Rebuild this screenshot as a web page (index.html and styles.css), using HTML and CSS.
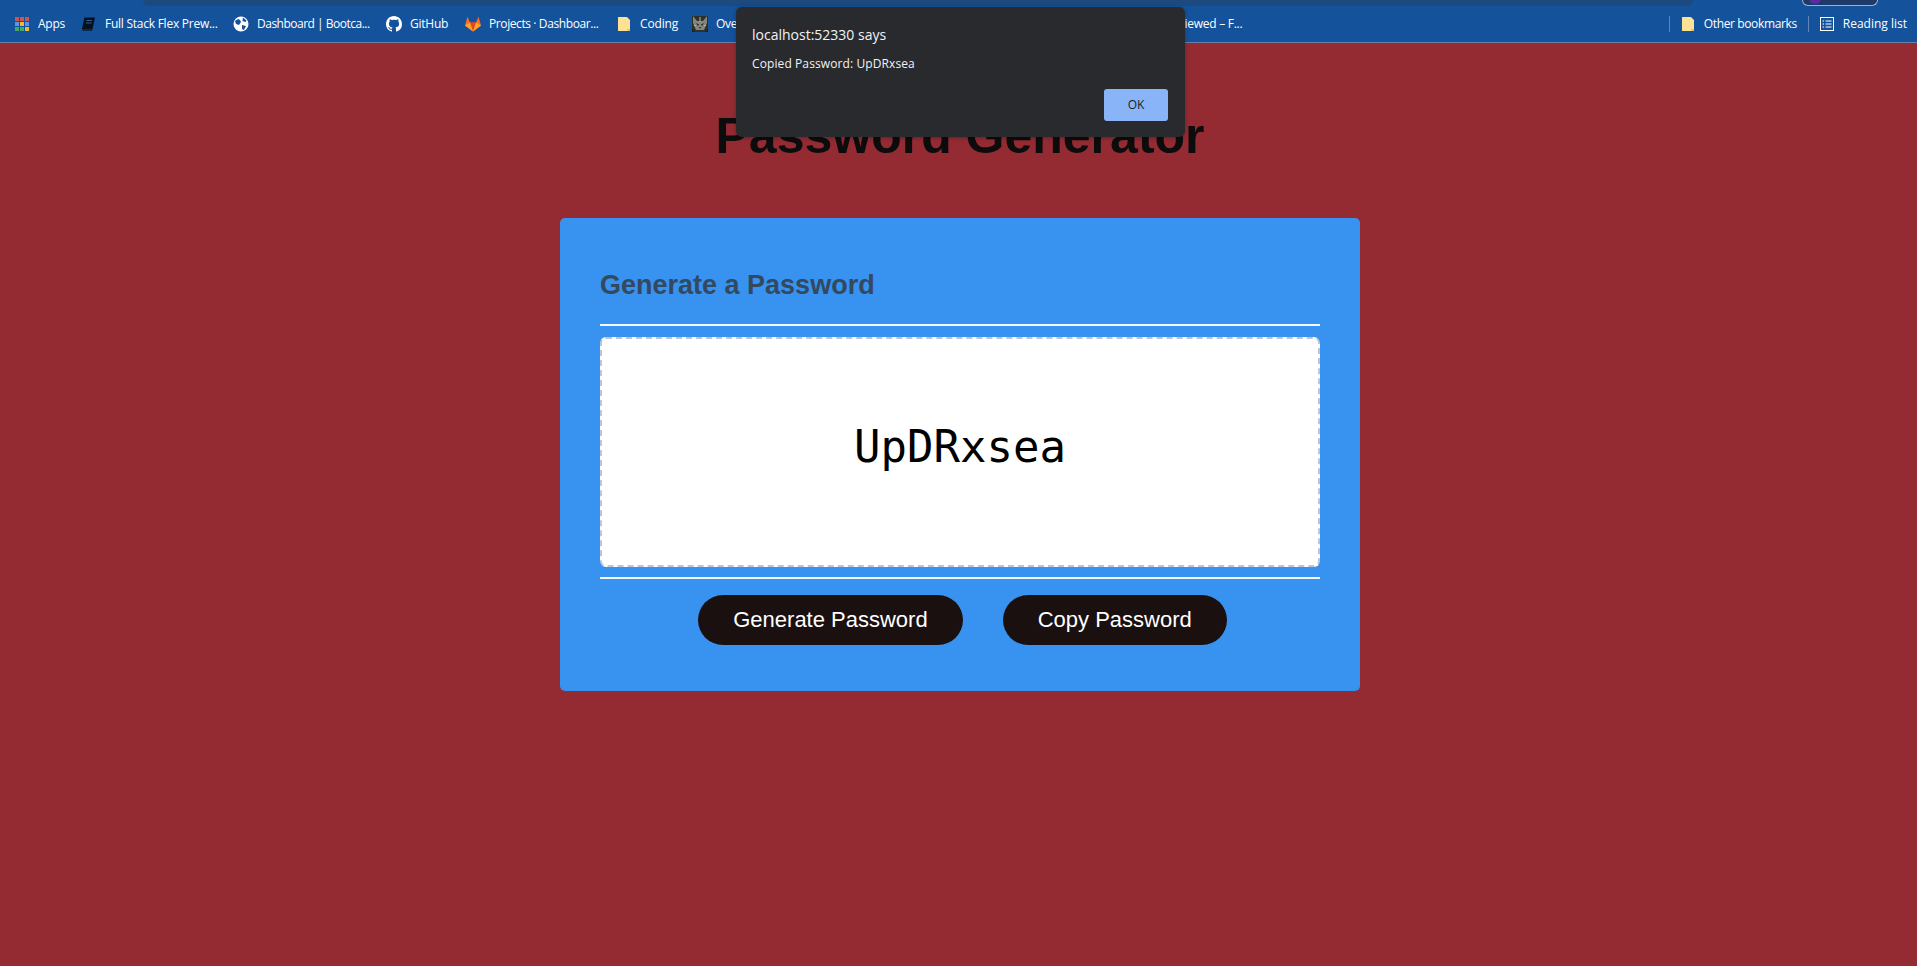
FILE: index.html
```html
<!DOCTYPE html>
<html lang="en">
<head>
<meta charset="utf-8">
<title>Password Generator</title>
<link rel="stylesheet" href="styles.css">
</head>
<body>
<header class="chrome">
  <div class="omnibox"></div>
  <div class="profile"><span class="avatar"></span></div>
  <nav class="bookmarks">
    <a class="bm bm-apps">
      <svg class="ico" viewBox="0 0 16 16"><g><rect x="1" y="1" width="4" height="4" fill="#c9564f"/><rect x="6" y="1" width="4" height="4" fill="#c9564f"/><rect x="11" y="1" width="4" height="4" fill="#c9564f"/><rect x="1" y="6" width="4" height="4" fill="#5a93e8"/><rect x="6" y="6" width="4" height="4" fill="#e6bd3a"/><rect x="11" y="6" width="4" height="4" fill="#5a93e8"/><rect x="1" y="11" width="4" height="4" fill="#46a868"/><rect x="6" y="11" width="4" height="4" fill="#46a868"/><rect x="11" y="11" width="4" height="4" fill="#e6bd3a"/></g></svg>
      Apps</a>
    <a class="bm bm-flex">
      <svg class="ico" viewBox="0 0 16 16"><path d="M4.500 1.500h10.500l-2.500 11.500H2z" fill="#06101e"/><path d="M2 13h10.500l-.4 2H2.500z" fill="#0b2a52"/><path d="M6.500 4.500h5.500M6 7h5.500" stroke="#2c5d9c" stroke-width="1"/></svg>
      Full Stack Flex Prew...</a>
    <a class="bm bm-dash">
      <svg class="ico" viewBox="0 0 16 16"><circle cx="8" cy="8" r="7.500" fill="#fff"/><path d="M2 5l3-2 2 1 1 2-2 3-3-1zM9 9l4 1-2 4-2-1zM10 1.500l3.500 3-1 1.500-3-1z" fill="#14529c"/></svg>
      Dashboard | Bootca...</a>
    <a class="bm bm-git">
      <svg class="ico" viewBox="0 0 16 16"><path fill="#fff" d="M8 0C3.580 0 0 3.580 0 8c0 3.540 2.290 6.530 5.470 7.590.4.070.55-.17.55-.38 0-.19-.01-.82-.01-1.490-2.010.37-2.530-.49-2.690-.94-.09-.23-.48-.94-.82-1.130-.28-.15-.68-.52-.01-.53.63-.01 1.080.58 1.230.82.72 1.210 1.870.87 2.330.66.070-.52.28-.87.51-1.070-1.780-.2-3.640-.89-3.640-3.950 0-.87.31-1.590.82-2.150-.08-.2-.36-1.020.08-2.120 0 0 .67-.21 2.200.82.64-.18 1.320-.27 2-.27s1.360.09 2 .27c1.530-1.040 2.200-.82 2.200-.82.44 1.100.16 1.920.08 2.120.51.560.82 1.270.82 2.150 0 3.070-1.870 3.750-3.650 3.950.29.25.54.73.54 1.480 0 1.070-.01 1.930-.01 2.200 0 .21.15.46.55.38A8.010 8.010 0 0016 8c0-4.420-3.580-8-8-8z"/></svg>
      GitHub</a>
    <a class="bm bm-lab">
      <svg class="ico" viewBox="0 0 16 16"><path d="M8 15.500L0 9.500 2.500 .8 5 6.500h6L13.500 .8 16 9.500z" fill="#fc6d26"/><path d="M8 15.500L5 6.500h6z" fill="#e24329"/><path d="M0 9.500L8 15.500 5 6.500zM16 9.500L8 15.500l3-9z" fill="#fca326"/></svg>
      Projects · Dashboar...</a>
    <a class="bm bm-code">
      <svg class="ico" viewBox="0 0 16 16"><path d="M2 1h9l3 3v11H2z" fill="#fde293"/><path d="M11 13h3v2h-3z" fill="#e9c46a"/></svg>
      Coding</a>
    <a class="bm bm-over">
      <svg class="ico" viewBox="0 0 16 16"><rect width="16" height="16" fill="#2e302c"/><path d="M1 0l4 5h6l4-5v7l-3 7H4L1 7z" fill="#83867b"/><path d="M4 7l3 1.500-1 1.500zM12 7L9 8.500l1 1.500zM7 11h2l-1 2zM0 12l3 4H0zM16 12l-3 4h3z" fill="#23241f"/><path d="M7.500 1h1v5h-1zM2 9h2v1H2zM12 9h2v1h-2z" fill="#b5b7ab"/></svg>
      Overview | Project</a>
    <a class="bm bm-rev">Reviewed – F...</a>
    <span class="bm-spacer"></span>
    <i class="bm-sep"></i>
    <a class="bm bm-other">
      <svg class="ico" viewBox="0 0 16 16"><path d="M2 1h9l3 3v11H2z" fill="#fde293"/><path d="M11 13h3v2h-3z" fill="#e9c46a"/></svg>
      Other bookmarks</a>
    <i class="bm-sep bm-sep-2"></i>
    <a class="bm bm-read">
      <svg class="ico" viewBox="0 0 16 16"><rect x="1.500" y="1.500" width="13" height="13" fill="none" stroke="#fff"/><path d="M3.500 5h1.500M6.500 5h6M3.500 8h1.500M6.500 8h6M3.500 11h1.500M6.500 11h6" stroke="#fff"/></svg>
      Reading list</a>
  </nav>
</header>

<main class="page">
  <h1 class="title">Password Generator</h1>
  <section class="card">
    <h2 class="card-title">Generate a Password</h2>
    <div class="card-body">
      <textarea class="password" readonly>UpDRxsea</textarea>
    </div>
    <div class="actions">
      <button class="btn btn-gen">Generate Password</button>
      <button class="btn">Copy Password</button>
    </div>
  </section>
</main>

<div class="alert" role="alertdialog">
  <p class="alert-origin">localhost:52330 says</p>
  <p class="alert-msg">Copied Password: UpDRxsea</p>
  <div class="alert-actions"><button class="alert-ok">OK</button></div>
</div>
</body>
</html>
```

FILE: styles.css
```css
* { box-sizing: border-box; }
html, body { height: 100%; }
body {
  margin: 0;
  background: #942b33;
  font-family: "Liberation Sans", Arial, sans-serif;
  overflow: hidden;
}
.chrome {
  position: relative;
  height: 43px;
  background: #14529c;
  border-bottom: 1px solid #6d7ea8;
}
.omnibox {
  position: absolute;
  left: 143px;
  right: 224px;
  top: 0;
  height: 6px;
  background: #1c4a7e;
  border-radius: 0 0 12px 12px;
}
.profile {
  position: absolute;
  left: 1802px;
  top: 0;
  width: 76px;
  height: 6px;
  overflow: hidden;
  background: #1d3a6a;
  border: 1px solid #9fb3cf;
  border-top: 0;
  border-radius: 0 0 12px 12px;
}
.avatar {
  position: absolute;
  left: 6px;
  top: -8px;
  width: 12px;
  height: 12px;
  border-radius: 50%;
  background: #5a2ca0;
}
.bookmarks {
  display: flex;
  align-items: center;
  height: 42px;
  padding: 6px 10px 0 14px;
  color: #fff;
  font: 12px/16px "Open Sans", "Noto Sans", sans-serif;
  letter-spacing: -0.25px;
}
.bm { display: flex; align-items: center; white-space: nowrap; }
.ico { width: 16px; height: 16px; margin-right: 8px; flex: none; }
.bm-apps { width: 66px; }
.bm-flex { width: 153px; }
.bm-flex .ico { margin-right: 9px; }
.bm-dash { width: 153px; letter-spacing: -0.5px; }
.bm-git { width: 79px; }
.bm-lab { width: 151px; letter-spacing: -0.4px; }
.bm-code { width: 76px; letter-spacing: -0.15px; }
.bm-over { width: 473px; }
.bm-spacer { flex: 1; }
.bm-sep { width: 1px; height: 16px; background: #5f87b8; margin-right: 10px; }
.bm-sep-2 { margin: 0 10px 0 11px; }
.bm-other { letter-spacing: -0.37px; }
.bm-read { letter-spacing: 0; }
.page {
  display: flex;
  flex-direction: column;
  align-items: center;
  padding-left: 3px;
}
.title {
  margin: 64px 0 0;
  font-size: 50px;
  line-height: 58px;
  font-weight: 700;
  color: #0c0c0c;
}
.card {
  width: 800px;
  height: 473px;
  margin-top: 53px;
  padding: 40px;
  background: #3792f0;
  border-radius: 5px;
}
.card-title {
  margin: 0;
  height: 66px;
  font-size: 27px;
  line-height: 32px;
  font-weight: 700;
  color: #34495e;
  padding-top: 11px;
}
.card-body {
  padding: 11px 0 10px;
  border-top: 2px solid #f3f8fd;
  border-bottom: 2px solid #f3f8fd;
}
.password {
  display: block;
  width: 100%;
  height: 230px;
  padding: 81px 0 0;
  resize: none;
  outline: 0;
  background: #fff;
  border: 2px dashed #bcc6d6;
  border-radius: 6px;
  color: #000;
  text-align: center;
  font: 44px/54px "DejaVu Sans Mono", monospace;
  overflow: hidden;
}
.actions {
  display: flex;
  justify-content: center;
  gap: 40px;
  margin-top: 16px;
  padding-left: 5px;
}
.btn {
  height: 50px;
  padding: 0 35px;
  border: 0;
  border-radius: 25px;
  background: #1b1010;
  color: #fff;
  font: 22px/26px "Liberation Sans", Arial, sans-serif;
}
.alert {
  position: absolute;
  left: 736px;
  top: 7px;
  width: 449px;
  height: 130px;
  padding: 18px 17px 0 16px;
  background: #292a2e;
  border-radius: 6px;
  color: #f1f3f5;
  font-family: "Open Sans", "Noto Sans", sans-serif;
  box-shadow: 0 1px 4px rgba(0,0,0,.3);
}
.alert-origin { margin: 0; font-size: 14px; line-height: 20px; letter-spacing: 0; }
.alert-msg { margin: 10px 0 0; font-size: 12px; line-height: 18px; letter-spacing: 0.1px; }
.alert-actions { display: flex; justify-content: flex-end; margin-top: 16px; }
.alert-ok {
  width: 64px;
  height: 32px;
  border: 0;
  border-radius: 3px;
  background: #8ab4f8;
  color: #202124;
  font: 12px/16px "Open Sans", "Noto Sans", sans-serif;
}
```
